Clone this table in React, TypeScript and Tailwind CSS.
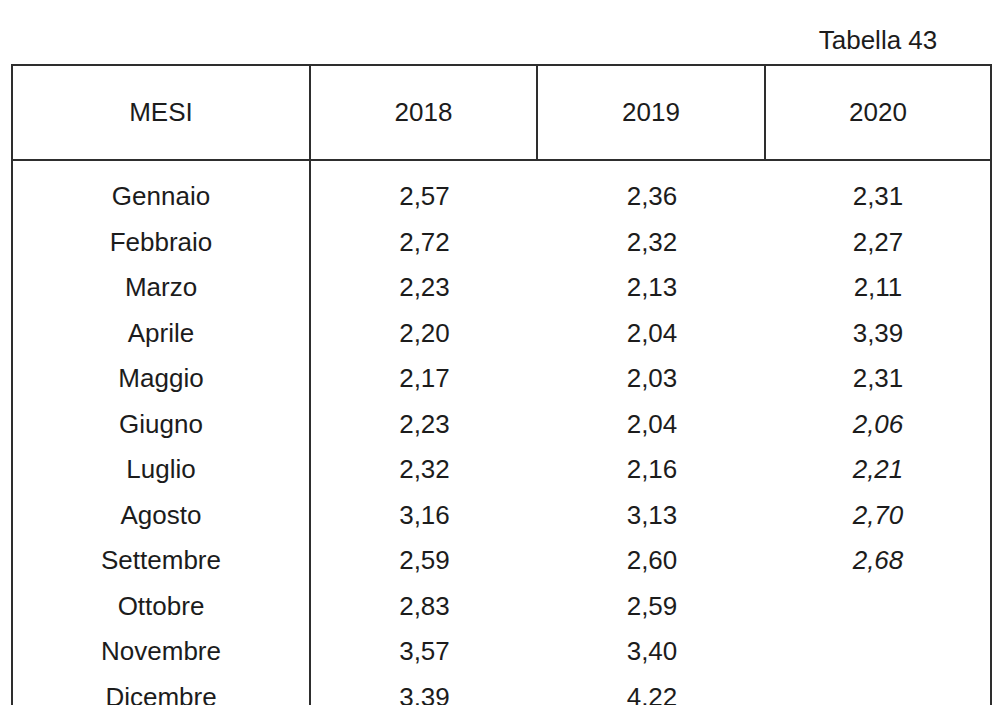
const ROWS: { mese: string; y18: string; y19: string; y20?: string; prov?: boolean }[] = [
  { mese: 'Gennaio', y18: '2,57', y19: '2,36', y20: '2,31' },
  { mese: 'Febbraio', y18: '2,72', y19: '2,32', y20: '2,27' },
  { mese: 'Marzo', y18: '2,23', y19: '2,13', y20: '2,11' },
  { mese: 'Aprile', y18: '2,20', y19: '2,04', y20: '3,39' },
  { mese: 'Maggio', y18: '2,17', y19: '2,03', y20: '2,31' },
  { mese: 'Giugno', y18: '2,23', y19: '2,04', y20: '2,06', prov: true },
  { mese: 'Luglio', y18: '2,32', y19: '2,16', y20: '2,21', prov: true },
  { mese: 'Agosto', y18: '3,16', y19: '3,13', y20: '2,70', prov: true },
  { mese: 'Settembre', y18: '2,59', y19: '2,60', y20: '2,68', prov: true },
  { mese: 'Ottobre', y18: '2,83', y19: '2,59' },
  { mese: 'Novembre', y18: '3,57', y19: '3,40' },
  { mese: 'Dicembre', y18: '3,39', y19: '4,22' },
];

function Cell({ children, italic }: { children?: React.ReactNode; italic?: boolean }) {
  return (
    <div className={`h-[45.5px] flex items-center justify-center ${italic ? 'italic' : ''}`}>
      {children}
    </div>
  );
}

export default function App() {
  return (
    <div
      className="h-[705px] overflow-hidden bg-white text-[26px] text-[#1c1c1c]"
      style={{ fontFamily: '"Liberation Sans", Arial, sans-serif' }}
    >
      <div className="w-[992px] flex justify-end h-[64px] pt-[24px]">
        <div className="w-[226px] pr-[2px] text-center leading-[32px]">Tabella 43</div>
      </div>

      <div className="ml-[11px] w-[981px] border-2 border-b-0 border-[#2e2e2e]">
        {/* header */}
        <div className="flex h-[95px] border-b-2 border-[#2e2e2e]">
          <div className="w-[298px] border-r-2 border-[#2e2e2e] flex items-center justify-center">MESI</div>
          <div className="w-[227px] border-r-2 border-[#2e2e2e] flex items-center justify-center">2018</div>
          <div className="w-[228px] border-r-2 border-[#2e2e2e] flex items-center justify-center">2019</div>
          <div className="w-[224px] flex items-center justify-center">2020</div>
        </div>

        {/* body */}
        <div className="flex h-[560px]">
          <div className="w-[298px] border-r-2 border-[#2e2e2e] pt-[13px]">
            {ROWS.map((r) => (
              <Cell key={r.mese}>{r.mese}</Cell>
            ))}
          </div>
          <div className="w-[227px] pt-[13px]">
            {ROWS.map((r) => (
              <Cell key={r.mese}>{r.y18}</Cell>
            ))}
          </div>
          <div className="w-[228px] pt-[13px]">
            {ROWS.map((r) => (
              <Cell key={r.mese}>{r.y19}</Cell>
            ))}
          </div>
          <div className="w-[224px] pt-[13px]">
            {ROWS.map((r) => (
              <Cell key={r.mese} italic={r.prov}>{r.y20}</Cell>
            ))}
          </div>
        </div>
      </div>
    </div>
  );
}
